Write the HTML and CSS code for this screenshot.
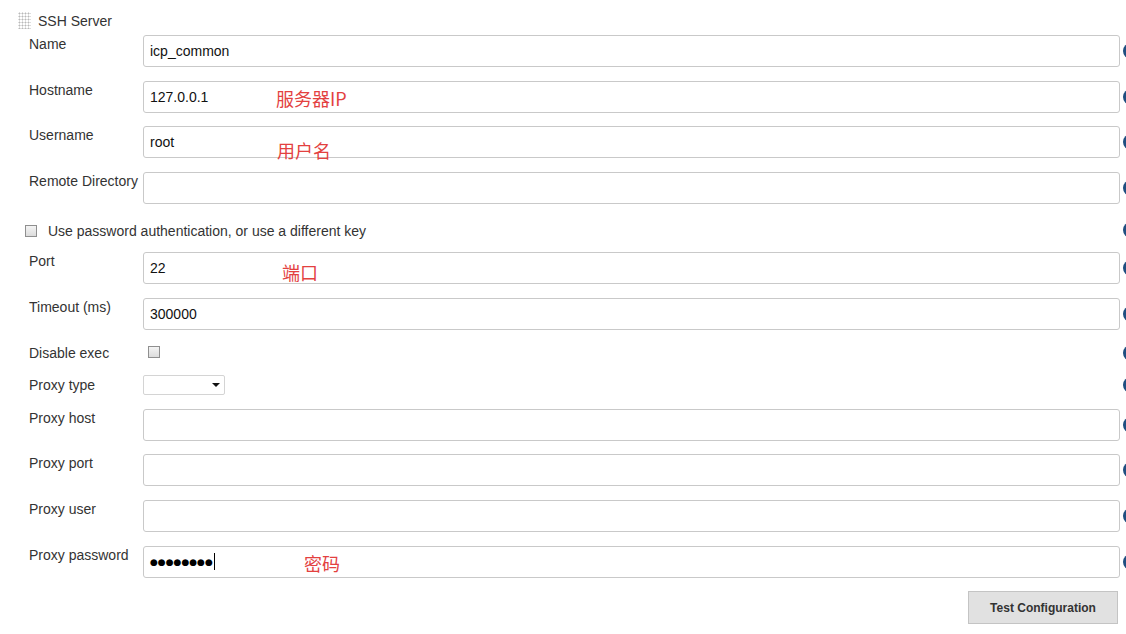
FILE: index.html
```html
<!DOCTYPE html>
<html>
<head>
<meta charset="utf-8">
<link rel="stylesheet" href="styles.css">
</head>
<body>
<div id="sshBlock">
  <div class="blockHead">
    <span class="grip"></span>
    <span class="blockTitle">SSH Server</span>
  </div>

  <div class="row">
    <label class="lbl">Name</label>
    <div class="cell"><input class="field" type="text" value="icp_common"></div>
    <span class="help"></span>
  </div>
  <div class="row">
    <label class="lbl">Hostname</label>
    <div class="cell">
      <input class="field" type="text" value="127.0.0.1">
      <span class="note noteHost">服务器IP</span>
    </div>
    <span class="help"></span>
  </div>
  <div class="row">
    <label class="lbl">Username</label>
    <div class="cell">
      <input class="field" type="text" value="root">
      <span class="note noteUser">用户名</span>
    </div>
    <span class="help"></span>
  </div>
  <div class="row">
    <label class="lbl">Remote Directory</label>
    <div class="cell"><input class="field" type="text" value=""></div>
    <span class="help"></span>
  </div>

  <div class="row checkRow">
    <label class="wideCheck"><input class="chk" type="checkbox"> Use password authentication, or use a different key</label>
    <span class="help"></span>
  </div>

  <div class="row">
    <label class="lbl">Port</label>
    <div class="cell">
      <input class="field" type="text" value="22">
      <span class="note notePort">端口</span>
    </div>
    <span class="help"></span>
  </div>
  <div class="row">
    <label class="lbl">Timeout (ms)</label>
    <div class="cell"><input class="field" type="text" value="300000"></div>
    <span class="help"></span>
  </div>
  <div class="row smallRow">
    <label class="lbl">Disable exec</label>
    <div class="cell"><input class="chk execChk" type="checkbox"></div>
    <span class="help"></span>
  </div>
  <div class="row selRow">
    <label class="lbl">Proxy type</label>
    <div class="cell">
      <span class="selWrap"><select class="sel"><option></option></select></span>
    </div>
    <span class="help"></span>
  </div>
  <div class="row">
    <label class="lbl">Proxy host</label>
    <div class="cell"><input class="field" type="text" value=""></div>
    <span class="help"></span>
  </div>
  <div class="row">
    <label class="lbl">Proxy port</label>
    <div class="cell"><input class="field" type="text" value=""></div>
    <span class="help"></span>
  </div>
  <div class="row">
    <label class="lbl">Proxy user</label>
    <div class="cell"><input class="field" type="text" value=""></div>
    <span class="help"></span>
  </div>
  <div class="row">
    <label class="lbl">Proxy password</label>
    <div class="cell">
      <div class="field passField"><span class="dots">●●●●●●●●</span><span class="caret"></span></div>
      <span class="note notePass">密码</span>
    </div>
    <span class="help"></span>
  </div>

  <div class="btnRow">
    <button class="testBtn" type="button">Test Configuration</button>
  </div>
</div>
</body>
</html>
```

FILE: styles.css
```css
html, body
{
   margin: 0;
   padding: 0;
   background: #fff;
   overflow: hidden;
}

body
{
   font-family: "Liberation Sans", Arial, sans-serif;
   font-size: 14px;
   color: #333;
}

#sshBlock
{
   width: 1140px;
   padding: 12px 0 0 18px;
}

.blockHead
{
   display: flex;
   align-items: center;
   gap: 7px;
   height: 17px;
   margin-bottom: 6px;
}

.grip
{
   width: 13px;
   height: 17px;
   background-image: radial-gradient(circle, #b9b9b9 0.9px, transparent 1.1px);
   background-size: 3px 3px;
}

.blockTitle
{
   line-height: 18px;
}

.row
{
   display: grid;
   grid-template-columns: 111px 977px 16px;
   column-gap: 3px;
   align-items: start;
   margin: 0 0 13.6px 11px;
}

.lbl
{
   line-height: 18px;
   white-space: nowrap;
}

.cell
{
   position: relative;
}

.field
{
   box-sizing: border-box;
   display: block;
   width: 100%;
   height: 32px;
   margin: 0;
   padding: 0 6px;
   border: 1px solid #c9c9c9;
   border-radius: 3px;
   font-family: "Liberation Sans", Arial, sans-serif;
   font-size: 14px;
   color: #111;
   background: #fff;
   outline: none;
}

.help
{
   align-self: center;
   width: 16px;
   height: 16px;
   border-radius: 50%;
   background: #1f4e80;
}

.checkRow
{
   grid-template-columns: 1095px 16px;
   align-items: center;
   height: 26px;
   margin-left: 7px;
   margin-bottom: 9px;
}

.wideCheck
{
   display: flex;
   align-items: center;
   gap: 11px;
   line-height: 18px;
   padding-top: 1px;
}

.chk
{
   appearance: none;
   -webkit-appearance: none;
   box-sizing: border-box;
   width: 12px;
   height: 12px;
   margin: 0;
   border: 1px solid #8f8f8f;
   background: linear-gradient(#f4f4f4, #dcdcdc);
}

.smallRow
{
   height: 18px;
}

.execChk
{
   margin: 2px 0 0 5px;
}

.selRow .lbl
{
   line-height: 20px;
}

.selWrap
{
   position: relative;
   display: inline-block;
}

.sel
{
   appearance: none;
   -webkit-appearance: none;
   box-sizing: border-box;
   width: 82px;
   height: 20px;
   margin: 0;
   border: 1px solid #d4d4d4;
   border-radius: 2px;
   background: #fff;
}

.selWrap::after
{
   content: "";
   position: absolute;
   right: 5px;
   top: 8px;
   border-left: 4px solid transparent;
   border-right: 4px solid transparent;
   border-top: 4px solid #111;
}

.passField
{
   display: flex;
   align-items: center;
}

.dots
{
   font-family: "DejaVu Sans", sans-serif;
   font-size: 9px;
   letter-spacing: 0;
   color: #000;
}

.caret
{
   width: 1px;
   height: 17px;
   margin-left: 1px;
   background: #000;
}

.note
{
   position: absolute;
   font-family: "Noto Sans CJK SC", sans-serif;
   font-size: 18px;
   line-height: 18px;
   color: #e3413f;
   white-space: nowrap;
}

.noteHost { left: 133px; top: 8px; }
.noteUser { left: 134px; top: 15px; }
.notePort { left: 139px; top: 11px; }
.notePass { left: 161px; top: 8px; }

.btnRow
{
   display: flex;
   justify-content: flex-end;
   width: 1100px;
   margin-top: 0;
}

.testBtn
{
   width: 150px;
   height: 33px;
   border: 1px solid #c4c4c4;
   background: #e1e1e1;
   font-family: "Liberation Sans", Arial, sans-serif;
   font-size: 12px;
   font-weight: bold;
   color: #333;
}
```
